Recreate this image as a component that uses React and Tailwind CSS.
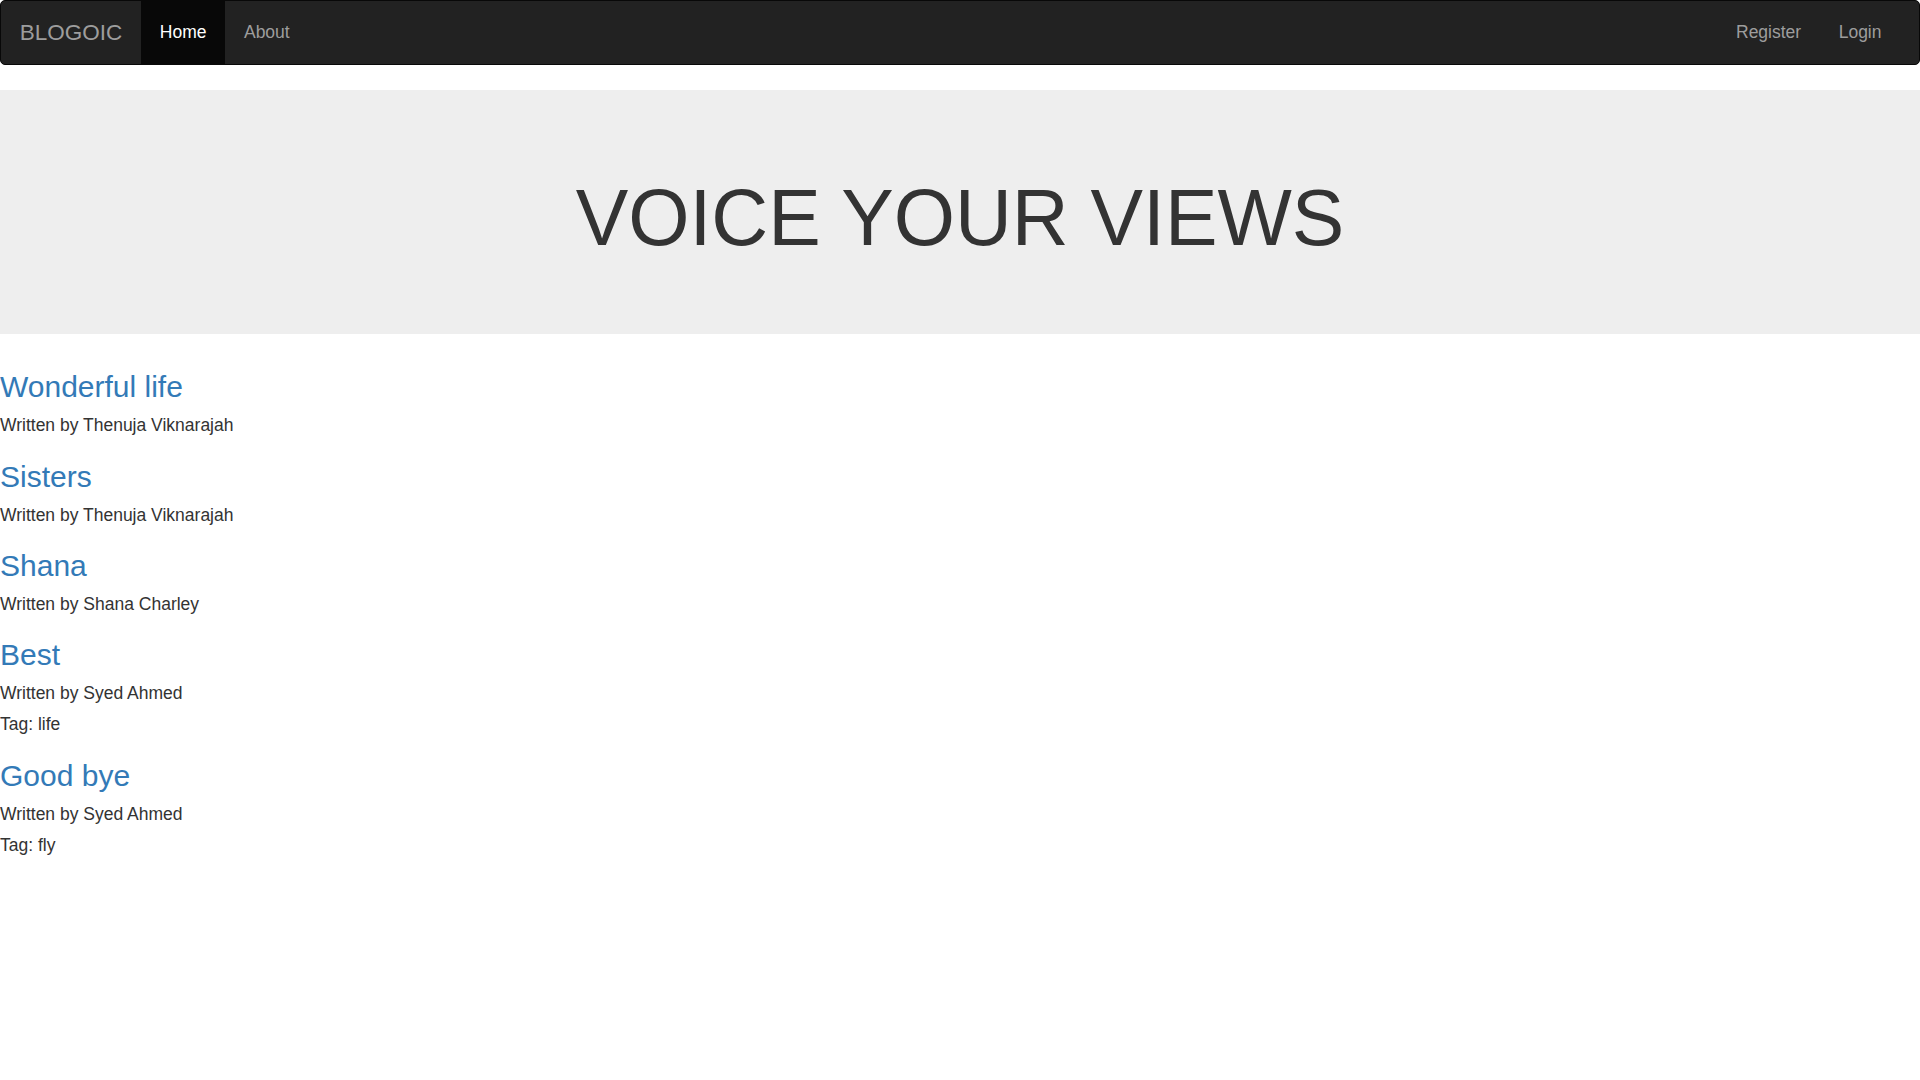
import React from 'react';

const posts = [
    { title: 'Wonderful life', author: 'Thenuja Viknarajah' },
    { title: 'Sisters', author: 'Thenuja Viknarajah' },
    { title: 'Shana', author: 'Shana Charley' },
    { title: 'Best', author: 'Syed Ahmed', tag: 'life' },
    { title: 'Good bye', author: 'Syed Ahmed', tag: 'fly' },
];

const App = () => {
    return (
        <div className="min-h-screen bg-white text-[#333] text-[17.5px] leading-[25px]" style={{ fontFamily: '"Liberation Sans", Arial, sans-serif' }}>
            <nav className="flex justify-between items-stretch h-[65px] bg-[#222] border-[1.25px] border-[#080808] rounded-[5px] mb-[25px]">
                <ul className="flex items-stretch">
                    <li>
                        <a href="#" className="block px-[18.75px] py-[18.75px] text-[22.5px] leading-[25px] text-[#9d9d9d]">BLOGOIC</a>
                    </li>
                    <li>
                        <a href="#" className="block px-[18.75px] py-[18.75px] leading-[25px] bg-[#080808] text-white">Home</a>
                    </li>
                    <li>
                        <a href="#" className="block px-[18.75px] py-[18.75px] leading-[25px] text-[#9d9d9d]">About</a>
                    </li>
                </ul>
                <ul className="flex items-stretch pr-[18.75px]">
                    <li>
                        <a href="#" className="block px-[18.75px] py-[18.75px] leading-[25px] text-[#9d9d9d]">Register</a>
                    </li>
                    <li>
                        <a href="#" className="block px-[18.75px] py-[18.75px] leading-[25px] text-[#9d9d9d]">Login</a>
                    </li>
                </ul>
            </nav>

            <div className="bg-[#eee] py-[60px] mb-[36px] text-center">
                <h1 className="mt-[25px] mb-[12.5px] text-[78.75px] leading-[1.1] text-[#333]">VOICE YOUR VIEWS</h1>
            </div>

            <div className="flex flex-col gap-[21.4px]">
                {posts.map((p) => (
                    <div key={p.title}>
                        <a href="#" className="block text-[30px] leading-[33px] text-[#337ab7]">{p.title}</a>
                        <div className="mt-[10px]">Written by {p.author}</div>
                        {p.tag && <div className="mt-[6px]">Tag: {p.tag}</div>}
                    </div>
                ))}
            </div>
        </div>
    );
};

export default App;
